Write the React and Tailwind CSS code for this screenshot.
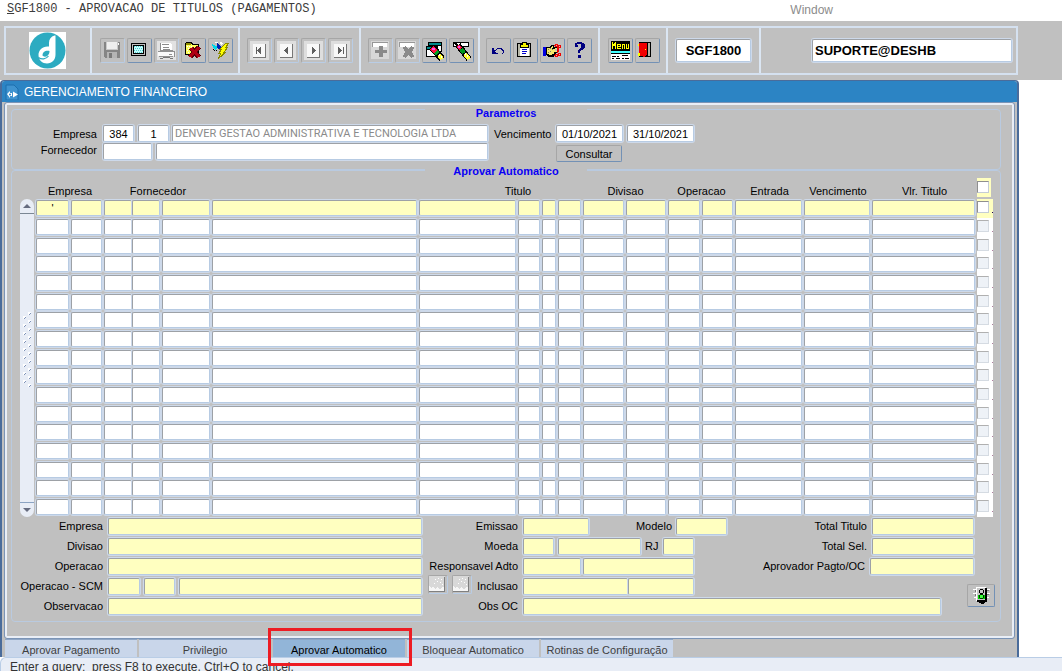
import React from "react";
import { clsx } from "clsx";

const FIELD =
  "block min-w-0 rounded-[2px] border border-t-[#9da1a6] border-l-[#9da1a6] border-r-[#b7cbe3] border-b-[#b7cbe3] shadow-[0_0_0_1px_#cdd9ea] outline-none leading-[14px]";

function Field({ label, className, ...rest }) {
  return <input type="text" aria-label={label} className={clsx(FIELD, "h-[17px] px-[2px]", className)} {...rest} />;
}

/* ---------- toolbar icons, drawn on a 23 x 23 pixel grid ---------- */

function Glyph({ children }) {
  return (
    <svg width="23" height="23" viewBox="0 0 23 23" shapeRendering="crispEdges" aria-hidden="true">
      {children}
    </svg>
  );
}

const SaveIcon = () => (
  <Glyph>
    <path d="M3 3h15l1 1v15H4l-1-1z" fill="#858585" />
    <path d="M5 3h12v8H5z" fill="#c9c9c9" />
    <path d="M6 3h10v7H6z" fill="#efefef" />
    <path d="M6 13h10v6H6z" fill="#b5b5b5" />
    <path d="M8 14h3v5H8z" fill="#7a7a7a" />
    <path d="M17 4h1v2h-1z" fill="#fff" />
  </Glyph>
);

const ScreenIcon = () => (
  <Glyph>
    <path d="M3 4h15v13H3z" fill="#000" />
    <path d="M4 5h13v11H4z" fill="#c0c0c0" />
    <path d="M5 6h11v9H5z" fill="#000" />
    <path d="M6 7h9v7H6z" fill="#c4ffff" />
    <path d="M6 7h1v1H6zM8 7h1v1H8zM10 7h1v1h-1zM12 7h1v1h-1zM14 7h1v1h-1zM7 9h1v1H7zM9 9h1v1H9zM11 9h1v1h-1zM13 9h1v1h-1zM6 11h1v1H6zM8 11h1v1H8zM10 11h1v1h-1zM12 11h1v1h-1zM14 11h1v1h-1zM7 13h1v1H7zM9 13h1v1H9zM11 13h1v1h-1zM13 13h1v1h-1z" fill="#4fcaca" />
  </Glyph>
);

const PrintIcon = () => (
  <Glyph>
    <path d="M2 2h19v19H2z" fill="#e2e2e2" />
    <path d="M6 4h9l2 2v6H6z" fill="#fff" />
    <path d="M7 5h7v1H7zM8 8h6v1H8zM8 10h7v1H8zM6 4v8H5V4z" fill="#8c8c8c" />
    <path d="M3 12h16v5H3z" fill="#fafafa" />
    <path d="M3 12h2v-1h13v1h2v6h-1v-5H3zM4 17h14v1H4zM14 15h3v1h-3z" fill="#909090" />
    <path d="M5 19h3v1H5zM15 19h3v1h-3zM8 18h7v1H8z" fill="#777" />
  </Glyph>
);

const FolderDeleteIcon = () => (
  <Glyph>
    <path d="M3 5l1-2h6l1 2h6v11H3z" fill="#000" />
    <path d="M4 5l1-1h4l1 2h6v9H4z" fill="#ffff5a" />
    <path d="M4 4h5v2H4z" fill="#8c8c00" />
    <path d="M5 7h1v1H5zM7 7h1v1H7zM9 7h1v1H9zM6 9h1v1H6zM5 11h1v1H5zM6 13h1v1H6z" fill="#fff" />
    <path d="M9 9l8 9M17 8l-9 10" stroke="#5a0008" strokeWidth="5" />
    <path d="M9 9l8 9M17 8l-9 10" stroke="#b00014" strokeWidth="3" />
  </Glyph>
);

const FlashIcon = () => (
  <Glyph>
    <path d="M3 5l6 3-2 3-3-2z" fill="#00d8e8" />
    <path d="M8 4l4 3-1 4-3-2z" fill="#0020b0" />
    <path d="M6 3h3v1H6zM11 3l3 1-2 3z" fill="#fff" />
    <path d="M4 10l2 2M7 11l1 1" stroke="#000" />
    <path d="M17 4h3l-3 4h2l-4 5h2l-8 7 3-6h-2l3-4h-2z" fill="#ffff00" stroke="#8a8a00" strokeWidth="1" />
  </Glyph>
);

function NavIcon({ d }) {
  return (
    <Glyph>
      <path d="M2 2h19v19H2z" fill="#dedede" />
      <path d="M5 5h12v13H5z" fill="#f8f8f8" />
      <path d="M17 5h1v14H5v-1h12z" fill="#777" />
      <path d={d} fill="#5f5f5f" />
    </Glyph>
  );
}

const InsertIcon = () => (
  <Glyph>
    <path d="M2 2h18v18H2z" fill="#d8d8d8" />
    <path d="M4 4h14v4H4z" fill="#fff" />
    <path d="M3 3h16v1H4v4H3z" fill="#979797" />
    <path d="M10 7h4v4h4v3h-4v4h-4v-4H6v-3h4z" fill="#8a8a8a" />
  </Glyph>
);

const RemoveIcon = () => (
  <Glyph>
    <path d="M2 2h18v18H2z" fill="#d8d8d8" />
    <path d="M4 4h14v4H4z" fill="#fff" />
    <path d="M3 3h16v1H4v4H3z" fill="#979797" />
    <path d="M8 8l9 10M17 8L8 18" stroke="#8a8a8a" strokeWidth="4" />
  </Glyph>
);

const QueryIcon = () => (
  <Glyph>
    <path d="M5 3h14v10H5z" fill="#000" />
    <path d="M6 4h12v2H6z" fill="#008a8a" />
    <path d="M6 7h12v5H6z" fill="#fff" />
    <path d="M3 7h12v11H3z" fill="#000" />
    <path d="M4 8h10v2H4z" fill="#008a8a" />
    <path d="M4 11h10v6H4z" fill="#fff" />
    <path d="M9 8l10 12" stroke="#000" strokeWidth="7" />
    <path d="M9 9l4 4" stroke="#ff1040" strokeWidth="5" />
    <path d="M9 9h3v2H9z" fill="#ff50f0" />
    <path d="M13 13l2 2" stroke="#00a020" strokeWidth="5" />
    <path d="M16 16l3 4" stroke="#ffff30" strokeWidth="4" />
    <path d="M16 15h1v2h-1zM18 17h1v2h-1z" fill="#fff" />
  </Glyph>
);

const ExecuteIcon = () => (
  <Glyph>
    <path d="M3 3h16v5H3z" fill="#000" />
    <path d="M4 4h14v3H4z" fill="#fff" />
    <path d="M5 4l4 4" stroke="#000" strokeWidth="2" />
    <path d="M8 6l11 14" stroke="#000" strokeWidth="6" />
    <path d="M8 7l3 3" stroke="#ff1040" strokeWidth="4" />
    <path d="M8 7h2v2H8z" fill="#ff50f0" />
    <path d="M11 10l3 4" stroke="#009a20" strokeWidth="4" />
    <path d="M15 15l4 5" stroke="#ffff30" strokeWidth="4" />
    <path d="M15 14h1v2h-1zM17 16h1v2h-1z" fill="#fff" />
  </Glyph>
);

const UndoIcon = () => (
  <Glyph>
    <path d="M5 9v6h6v-1H9v-1H8v-1h1v-1h1v-1h4v1h1v1h1v2h-1v1h1v-1h1v-3h-1v-1h-1V9h-5v1H9v1H7V9z" fill="#000080" />
  </Glyph>
);

const ClipboardIcon = () => (
  <Glyph>
    <path d="M3 4h14v14H3z" fill="#000" />
    <path d="M4 5h12v12H4z" fill="#b8b8a8" />
    <path d="M6 7h9v10H6z" fill="#fff" />
    <path d="M6 5h2V3h4v2h2v3H6z" fill="#f5f500" stroke="#000" strokeWidth="1" />
    <path d="M8 10h5v1H8zM8 12h5v1H8zM8 14h4v1H8z" fill="#0000d0" />
  </Glyph>
);

const HandIcon = () => (
  <Glyph>
    <path d="M2 8h3v9H2z" fill="#0000e0" />
    <path d="M5 8h3l2-2h3v2h5v2h-4v2h3v2h-2v2h-2v2H8l-3-2z" fill="#000" />
    <path d="M6 9h3l2-2h1v2h-1v1h6v-1h-3v3h2v1h-3v2h-2v1H9l-3-1z" fill="#f4e86a" />
    <path d="M7 10h1v1H7zM9 9h1v1H9zM7 13h1v1H7zM9 12h1v1H9zM11 10h1v1h-1z" fill="#777" />
    <circle cx="15.500" cy="6.500" r="1.500" fill="none" stroke="#f00000" />
    <circle cx="18.500" cy="7.500" r="1.500" fill="none" stroke="#f00000" />
    <circle cx="18.500" cy="15.500" r="1.500" fill="none" stroke="#f00000" />
    <circle cx="15.500" cy="16.500" r="1.500" fill="none" stroke="#f00000" />
    <path d="M16 8l2 5M18 9l-2 5" fill="none" stroke="#f00000" />
  </Glyph>
);

const HelpIcon = () => (
  <Glyph>
    <path d="M7 4h2V3h5v1h2v1h1v4h-1v1h-1v1h-2v1h-1v2h-2v-3h1v-1h1V9h1V5h-4v1h1v2H7z" fill="#000080" />
    <path d="M10 16h3v3h-3z" fill="#000080" />
  </Glyph>
);

const MenuIcon = () => (
  <Glyph>
    <path d="M2 2h19v10H2z" fill="#000" />
    <path d="M3 3h1l1 3 1-3h1v7H6V6l-1 2-1-2v4H3zM8 5h4v3H9v1h3v1H8zM9 6v1h2V6zM13 5h3v5h-1V6h-1v4h-1zM17 5h1v4h1V5h1v5h-3z" fill="#ffff00" />
    <path d="M2 12h19v2H2z" fill="#40ffff" />
    <path d="M2 14h19v7H2z" fill="#fff" />
    <path d="M2 14h19v1H2zM3 17h4v1H3zM8 17h2v1H8zM13 16h6v1h-6zM3 19h2v1H3zM7 19h4v1H7zM13 19h2v1h-2zM16 19h4v1h-4z" fill="#000" />
  </Glyph>
);

const ExitIcon = () => (
  <Glyph>
    <path d="M3 3h12v15H3z" fill="#000" />
    <path d="M11 4h3v13h-3z" fill="#b4b0a0" />
    <path d="M3 4h8v11l-2 3H7l-1-1H3z" fill="#f00000" />
    <path d="M11 4h1v13h-1z" fill="#000" />
    <path d="M2 5h1v2H2zM2 14h2v3H2zM9 10h1v1H9z" fill="#ffff00" />
  </Glyph>
);

const TrafficIcon = () => (
  <Glyph>
    <path d="M3 5h4v1H3zM16 5h4v1h-4zM3 9h4v1H3zM16 9h4v1h-4zM4 13h3v1H4zM16 13h3v1h-3z" fill="#fff" />
    <path d="M5 6h3v2H5zM15 6h4v1h-4zM5 10h3v2H5zM15 10h4v1h-4z" fill="#777" />
    <path d="M6 3h10v14H6z" fill="#fff" />
    <path d="M7 4h10v14H7z" fill="#000" />
    <path d="M7 4h8v12H7z" fill="#c8c8c8" />
    <circle cx="11.500" cy="7.500" r="2" fill="#c8c8c8" stroke="#000" />
    <path d="M8 11h7v4H8z" fill="#00d800" />
    <circle cx="11.500" cy="12.500" r="2" fill="#40ff40" stroke="#003000" />
    <path d="M9 18h6v1H9zM11 19h3v1h-3z" fill="#000" />
  </Glyph>
);

function ToolButton({ label, disabled, children }) {
  return (
    <button
      type="button"
      aria-label={label}
      disabled={disabled}
      className={clsx(
        "size-[25px] shrink-0 rounded-[2px] border border-t-[#a6a6a6] border-l-[#a6a6a6]",
        disabled ? "border-r-[#b9cde6] border-b-[#b9cde6]" : "border-r-[#7391b5] border-b-[#7391b5]"
      )}
    >
      {children}
    </button>
  );
}

function ToolGroup({ className, children }) {
  return (
    <div className={clsx("flex shrink-0 items-center gap-[2px] border-r-2 border-[#dbe6f3]", className)}>
      {children}
    </div>
  );
}

function Logo() {
  return (
    <svg width="37" height="37" viewBox="0 0 37 37" role="img" aria-label="Denver">
      <path d="M0 0h37v37H0z" fill="#fff" />
      <circle cx="18.500" cy="18.500" r="18" fill="#2cabc1" />
      <path d="M25.500 3.500c-3.500 1-5.500 3.500-5.500 7.500v3.500c-6-.8-10.500 3-10.500 8.500 0 5 4 8.500 8.500 8.500 5 0 8.500-3.500 8.500-9V3.500z" fill="#fff" />
      <path d="M20.500 19c-4.500-.8-7 1.500-7 4.500 1 1.500 3.500 1.500 5 .2 1.300-1.200 2-2.700 2-4.700z" fill="#2cabc1" />
      <path d="M9.500 25.500c3 2.200 7.500 1.800 10-1.500" fill="none" stroke="#2cabc1" strokeWidth="1.200" />
    </svg>
  );
}

/* ---------- data ---------- */

const COLUMNS = [
  { name: "Empresa", col: "w-[35px]" },
  { name: "Filial", col: "w-[33px]" },
  { name: "Fornecedor tipo", col: "w-[28px]", tight: true },
  { name: "Fornecedor grupo", col: "w-[30px]" },
  { name: "Fornecedor codigo", col: "w-[50px]" },
  { name: "Fornecedor nome", col: "" },
  { name: "Titulo", col: "w-[99px]" },
  { name: "Titulo serie", col: "w-[24px]" },
  { name: "Titulo parcela", col: "w-[16px]" },
  { name: "Titulo tipo", col: "w-[25px]" },
  { name: "Divisao", col: "w-[43px]" },
  { name: "Divisao sub", col: "w-[42px]" },
  { name: "Operacao", col: "w-[34px]" },
  { name: "Operacao sub", col: "w-[33px]" },
  { name: "Entrada", col: "w-[69px]" },
  { name: "Vencimento", col: "w-[68px]" },
  { name: "Vlr. Titulo", col: "w-[105px]" },
];

const ROWS = Array.from({ length: 17 }, (_, i) => i);

const TABS = [
  "Aprovar Pagamento",
  "Privilegio",
  "Aprovar Automatico",
  "Bloquear Automatico",
  "Rotinas de Configuração",
];

const CHECK = "block size-[12px] appearance-none border border-t-[#8f8f8f] border-l-[#8f8f8f] border-r-[#c4ccd6] border-b-[#c4ccd6]";

function Head({ span, className, children }) {
  return (
    <th colSpan={span} scope="colgroup" className={clsx("p-0 pb-px align-bottom font-normal leading-[13px]", className)}>
      {children}
    </th>
  );
}

function TitlesTable() {
  return (
    <table className="min-w-0 flex-1 table-fixed border-collapse">
      <colgroup>
        {COLUMNS.map((c) => (
          <col key={c.name} className={c.col} />
        ))}
        <col className="w-[16px]" />
      </colgroup>
      <thead>
        <tr className="h-[21px]">
          <Head span={2}>Empresa</Head>
          <Head span={3}>Fornecedor</Head>
          <Head span={1} />
          <Head span={4} className="pl-[34px]">Titulo</Head>
          <Head span={2}>Divisao</Head>
          <Head span={2}>Operacao</Head>
          <Head span={1}>Entrada</Head>
          <Head span={1}>Vencimento</Head>
          <Head span={1}>Vlr. Titulo</Head>
          <th className="p-0 align-top">
            <div className="flex h-[19px] w-[14px] items-start bg-[#ffffc0] pt-[3px]">
              <input type="checkbox" aria-label="Selecionar todos" className={clsx(CHECK, "bg-white")} />
            </div>
          </th>
        </tr>
      </thead>
      <tbody>
        {ROWS.map((r) => (
          <tr key={r} className="h-[19px] nth-[3n]:h-[18px]">
            {COLUMNS.map((c) => (
              <td key={c.name} className={clsx("p-0 pt-px align-top", c.tight ? "pr-0" : "pr-[2px]")}>
                <input
                  type="text"
                  aria-label={`${c.name}, linha ${r + 1}`}
                  defaultValue={r === 0 && c.name === "Empresa" ? "'" : ""}
                  className={clsx(FIELD, "h-[16px] w-full text-center", r === 0 ? "bg-[#ffffc0]" : "bg-white")}
                />
              </td>
            ))}
            <td className={clsx("p-0 pt-[2px] align-top", r === 0 ? "bg-[#ffffc0]" : "bg-white")}>
              <div className="flex items-end justify-between">
                <input
                  type="checkbox"
                  aria-label={`Selecionar linha ${r + 1}`}
                  className={clsx(CHECK, r === 0 ? "bg-white" : "bg-[#e8edf5] opacity-70")}
                />
                <span className={clsx("size-px", r === 0 ? "bg-[#200050]" : "bg-[#b080a0]")} />
              </div>
            </td>
          </tr>
        ))}
      </tbody>
    </table>
  );
}

function ScrollBar() {
  return (
    <div className="mt-[21px] flex w-[14px] shrink-0 flex-col rounded-full bg-[#e8edf6]">
      <button type="button" aria-label="Linha anterior" className="flex h-[15px] items-center justify-center rounded-t-full border-b border-[#7b8794]">
        <svg width="8" height="4" viewBox="0 0 8 4" aria-hidden="true"><path d="M4 0l4 4H0z" fill="#666c80" /></svg>
      </button>
      <div className="flex flex-1 items-start justify-center pt-[98px]">
        <svg width="9" height="76" viewBox="0 0 9 76" aria-hidden="true" shapeRendering="crispEdges">
          {Array.from({ length: 10 }, (_, i) => (
            <g key={i}>
              <path d={`M5 ${i * 8}h3v1h-1v1h-1v1h-1zM0 ${i * 8 + 4}h3v1h-1v1h-1v1h-1z`} fill="#fff" />
              <path d={`M7 ${i * 8 + 1}h1v1h-1v1h-1v-1h1zM2 ${i * 8 + 5}h1v1h-1v1h-1v-1h1z`} fill="#7f93b8" />
            </g>
          ))}
        </svg>
      </div>
      <button type="button" aria-label="Proxima linha" className="flex h-[15px] items-center justify-center rounded-b-full border-t border-[#8ba3c2]">
        <svg width="8" height="4" viewBox="0 0 8 4" aria-hidden="true"><path d="M0 0h8L4 4z" fill="#666c80" /></svg>
      </button>
    </div>
  );
}

const YELLOW = "bg-[#ffffc0]";

function LeftLine({ label, children }) {
  return (
    <div className="flex h-[20px] items-center">
      <span className="mr-[5px] w-[91px] shrink-0 text-right">{label}</span>
      {children ?? <Field label={label} className={clsx(YELLOW, "flex-1")} />}
    </div>
  );
}

function MidLine({ label, before, children }) {
  return (
    <div className="flex h-[20px] items-center">
      <div className="mr-[5px] flex w-[96px] shrink-0 items-center justify-end whitespace-nowrap">
        {before}
        <span>{label}</span>
      </div>
      {children}
    </div>
  );
}

function TotalLine({ label, wide }) {
  return (
    <label className="col-span-2 flex h-[20px] items-center justify-end gap-[5px] pr-[26px]">
      <span>{label}</span>
      <input type="text" className={clsx(FIELD, YELLOW, "h-[17px] px-[2px]", wide ? "w-[104px]" : "w-[102px]")} />
    </label>
  );
}

function SmallButton({ label }) {
  return (
    <button type="button" aria-label={label} className="mb-[4px] h-[19px] w-[20px] rounded-[2px] border border-t-[#a6a6a6] border-l-[#a6a6a6] border-r-[#b9cde6] border-b-[#b9cde6]">
      <svg width="17" height="16" viewBox="0 0 17 16" aria-hidden="true" shapeRendering="crispEdges">
        <path d="M0 0h16v15H0z" fill="#d8d8d8" />
        <path d="M0 10l2 2 2-2 2 3 2-2 3 2 3-2 1 1v3H0z" fill="#f6f6f6" />
        <path d="M6 3h1v1H6zM9 2h1v1H9zM12 3h1v1h-1zM8 5h1v1H8zM11 6h1v1h-1zM5 7h1v1H5zM13 8h1v1h-1z" fill="#fff" />
        <path d="M15 1h1v15H0v-1h15z" fill="#808080" />
      </svg>
    </button>
  );
}

const LEGEND = "mx-auto w-[162px] bg-[#c0c0c0] text-center text-[11px] leading-[14px] font-bold text-[#0a00f5]";

export default function App() {
  return (
    <div className="flex h-screen flex-col overflow-hidden bg-white font-['Liberation_Sans',Arial,sans-serif] text-[11px] leading-[14px] text-black">
      <header className="flex h-[21px] shrink-0 items-center pl-[7px]">
        <a href="#main" className="pb-[3px] font-['Liberation_Mono','Courier_New',monospace] text-[12px] whitespace-nowrap text-[#3c3c3c]">
          <span className="underline">S</span>GF1800 - APROVACAO DE TITULOS (PAGAMENTOS)
        </a>
        <a href="#window" className="mr-[229px] ml-auto pb-[2px] text-[12px] text-[#8c8c8c]">Window</a>
      </header>

      <div className="shrink-0 bg-[#c0c0c0] py-[5px] pr-[44px] pl-[4px]">
        <div role="toolbar" className="flex h-[49px] border-2 border-[#d5e1f0]">
          <ToolGroup className="w-[86px] pl-[23px]">
            <Logo />
          </ToolGroup>
          <ToolGroup className="w-[148px] pl-[8px]">
            <ToolButton label="Salvar" disabled><SaveIcon /></ToolButton>
            <ToolButton label="Tela"><ScreenIcon /></ToolButton>
            <ToolButton label="Imprimir" disabled><PrintIcon /></ToolButton>
            <ToolButton label="Fechar"><FolderDeleteIcon /></ToolButton>
            <ToolButton label="Atualizar"><FlashIcon /></ToolButton>
          </ToolGroup>
          <ToolGroup className="w-[121px] pl-[7px]">
            <ToolButton label="Primeiro" disabled><NavIcon d="M8 8h1v7H8zM13 8v7h-1v-1h-1v-1h-1v-1H9v-1h1v-1h1V9h1V8z" /></ToolButton>
            <ToolButton label="Anterior" disabled><NavIcon d="M13 8v7h-1v-1h-1v-1h-1v-1H9v-1h1v-1h1V9h1V8z" /></ToolButton>
            <ToolButton label="Proximo" disabled><NavIcon d="M10 8v7h1v-1h1v-1h1v-1h1v-1h-1v-1h-1V9h-1V8z" /></ToolButton>
            <ToolButton label="Ultimo" disabled><NavIcon d="M14 8h1v7h-1zM9 8v7h1v-1h1v-1h1v-1h1v-1h-1v-1h-1V9h-1V8z" /></ToolButton>
          </ToolGroup>
          <ToolGroup className="w-[119px] pl-[7px]">
            <ToolButton label="Inserir registro" disabled><InsertIcon /></ToolButton>
            <ToolButton label="Remover registro" disabled><RemoveIcon /></ToolButton>
            <ToolButton label="Consultar"><QueryIcon /></ToolButton>
            <ToolButton label="Executar consulta"><ExecuteIcon /></ToolButton>
          </ToolGroup>
          <ToolGroup className="w-[120px] pl-[6px]">
            <ToolButton label="Desfazer"><UndoIcon /></ToolButton>
            <ToolButton label="Lista de valores"><ClipboardIcon /></ToolButton>
            <ToolButton label="Recortar"><HandIcon /></ToolButton>
            <ToolButton label="Ajuda"><HelpIcon /></ToolButton>
          </ToolGroup>
          <ToolGroup className="w-[68px] pl-[8px]">
            <ToolButton label="Menu"><MenuIcon /></ToolButton>
            <ToolButton label="Sair"><ExitIcon /></ToolButton>
          </ToolGroup>
          <ToolGroup className="w-[93px] justify-center">
            <input aria-label="Programa" defaultValue="SGF1800" className={clsx(FIELD, "h-[23px] w-[75px] bg-white text-center text-[13px] font-bold")} />
          </ToolGroup>
          <div className="flex min-w-0 flex-1 items-center pr-[4px] pl-[51px]">
            <input aria-label="Usuario" defaultValue="SUPORTE@DESHB" className={clsx(FIELD, "h-[23px] flex-1 bg-white px-[2px] text-[13px] font-bold")} />
          </div>
        </div>
      </div>

      <main id="main" className="mr-[43px] shrink-0 rounded-t-[4px] border-x-2 border-t border-[#4a6c9b] bg-[#c0c0c0]">
        <h1 className="flex h-[21px] items-center gap-[5px] rounded-t-[3px] bg-[#2c84c4] pl-[3px] text-[12px] text-white">
          <svg width="14" height="16" viewBox="0 0 14 16" aria-hidden="true">
            <path d="M1 1h8l4 4v11H1z" fill="#3f93d0" stroke="#1d6fae" strokeWidth="1" />
            <path d="M2 10l3-3v2h2v3H5v2zM8 7.500l5 3-5 3z" fill="#fff" />
            <circle cx="5" cy="10.500" r="1" fill="#2c84c4" />
          </svg>
          GERENCIAMENTO FINANCEIRO
        </h1>

        <div className="mx-[2px] rounded-[3px] border border-[#7b94b6] pt-[6px] pr-[13px] pb-[16px] pl-[6px] shadow-[inset_0_0_0_2px_#e9eef6]">
          <section className="h-[61px] rounded-[4px] border border-[#b9cae0]">
            <h2 className={clsx(LEGEND, "-mt-[4px]")}>Parametros</h2>
            <div className="flex h-[19px] items-center pt-[8px] pr-[306px] pl-[6px]">
              <label htmlFor="empresa" className="mr-[6px] w-[79px] shrink-0 text-right">Empresa</label>
              <Field id="empresa" defaultValue="384" className="mr-[4px] w-[31px] bg-white text-center" />
              <Field label="Filial" defaultValue="1" className="mr-[3px] w-[31px] bg-white text-center" />
              <Field label="Nome da empresa" defaultValue="DENVER GESTAO ADMINISTRATIVA E TECNOLOGIA LTDA" className="flex-1 bg-white font-[Roboto,sans-serif] text-[#8a8a8a]" />
              <label htmlFor="vencimento" className="w-[68px] shrink-0 pl-[6px]">Vencimento</label>
              <Field id="vencimento" defaultValue="01/10/2021" className="mr-[4px] w-[67px] bg-white text-center" />
              <Field label="Vencimento final" defaultValue="31/10/2021" className="w-[67px] bg-white text-center" />
            </div>
            <div className="flex items-start pt-[4px] pr-[306px] pl-[6px]">
              <label htmlFor="fornecedor" className="mr-[6px] w-[79px] shrink-0 text-right">Fornecedor</label>
              <Field id="fornecedor" className="mr-[4px] w-[49px] bg-white" />
              <Field label="Nome do fornecedor" className="flex-1 bg-white" />
              <button type="button" className="mt-[2px] mr-[72px] ml-[68px] h-[17px] w-[66px] rounded-[2px] border border-t-[#a6a6a6] border-l-[#a6a6a6] border-r-[#7391b5] border-b-[#7391b5]">
                Consultar
              </button>
            </div>
          </section>

          <section className="rounded-[4px] border border-[#b9cae0] pb-[5px]">
            <h2 className={clsx(LEGEND, "-mt-[7px]")}>Aprovar Automatico</h2>
            <div className="flex gap-[2px] pr-[7px] pl-[8px]">
              <ScrollBar />
              <TitlesTable />
            </div>

            <div className="-mt-px flex">
              <div className="min-w-0 flex-1">
                <LeftLine label="Empresa" />
                <LeftLine label="Divisao" />
                <LeftLine label="Operacao" />
                <LeftLine label="Operacao - SCM">
                  <Field label="Operacao SCM tipo" className={clsx(YELLOW, "mr-[4px] w-[32px]")} />
                  <Field label="Operacao SCM codigo" className={clsx(YELLOW, "mr-[4px] w-[31px]")} />
                  <Field label="Operacao SCM descricao" className={clsx(YELLOW, "flex-1")} />
                </LeftLine>
                <LeftLine label="Observacao" />
              </div>

              <div className="grid w-[578px] shrink-0 auto-rows-[20px] grid-cols-[305px_1fr_59px]">
                <MidLine label="Emissao">
                  <Field label="Emissao" className={clsx(YELLOW, "w-[66px]")} />
                  <span className="mr-[4px] ml-[47px]">Modelo</span>
                  <Field label="Modelo" className={clsx(YELLOW, "w-[51px]")} />
                </MidLine>
                <TotalLine label="Total Titulo" />
                <MidLine label="Moeda">
                  <Field label="Moeda" className={clsx(YELLOW, "mr-[4px] w-[31px]")} />
                  <Field label="Nome da moeda" className={clsx(YELLOW, "w-[83px]")} />
                  <span className="mr-[5px] ml-[4px]">RJ</span>
                  <Field label="RJ" className={clsx(YELLOW, "w-[31px]")} />
                </MidLine>
                <TotalLine label="Total Sel." />
                <MidLine label="Responsavel Adto">
                  <Field label="Responsavel Adto" className={clsx(YELLOW, "mr-[2px] w-[58px]")} />
                  <Field label="Nome do responsavel" className={clsx(YELLOW, "w-[111px]")} />
                </MidLine>
                <TotalLine label="Aprovador Pagto/OC" wide />
                <MidLine
                  label="Inclusao"
                  before={
                    <span className="mr-auto ml-[6px] flex gap-[4px]">
                      <SmallButton label="Anexo anterior" />
                      <SmallButton label="Proximo anexo" />
                    </span>
                  }
                >
                  <Field label="Inclusao" className={clsx(YELLOW, "w-[105px]")} />
                  <Field label="Usuario da inclusao" className={clsx(YELLOW, "w-[66px]")} />
                </MidLine>
                <div />
                <div className="row-span-2 pt-[8px] pl-[26px]">
                  <button type="button" aria-label="Liberar" className="flex h-[23px] w-[28px] items-center justify-center rounded-[2px] border border-t-[#a6a6a6] border-l-[#a6a6a6] border-r-[#7391b5] border-b-[#7391b5]">
                    <TrafficIcon />
                  </button>
                </div>
                <div className="col-span-2">
                  <MidLine label="Obs OC">
                    <Field label="Obs OC" className={clsx(YELLOW, "flex-1")} />
                  </MidLine>
                </div>
              </div>
            </div>
          </section>
        </div>

        <nav role="tablist" className="flex h-[18px] gap-[2px] pl-[3px]">
          {TABS.map((t) => {
            const active = t === "Aprovar Automatico";
            return (
              <button
                key={t}
                type="button"
                role="tab"
                aria-selected={active}
                className={clsx(
                  "relative w-[132px] border-t border-[#8fa6c5] pt-[2px] whitespace-nowrap",
                  active ? "bg-[#92b5d8] text-black" : "bg-[#c9d6ea] text-[#3f3f3f]"
                )}
              >
                {t}
                {active && (
                  <span className="pointer-events-none absolute -top-[12px] -right-[7px] -bottom-[9px] -left-[5px] z-10 border-3 border-[#ed1c24]" />
                )}
              </button>
            );
          })}
        </nav>
      </main>

      <footer className="min-h-0 flex-1 overflow-hidden rounded-tl-[6px] border-t border-l border-[#b9cde6] bg-[#e8edf6] pt-[2px] pl-[9px] text-[12px] leading-[14px] whitespace-pre text-[#333]">
        Enter a query;  press F8 to execute, Ctrl+Q to cancel.
      </footer>
    </div>
  );
}
